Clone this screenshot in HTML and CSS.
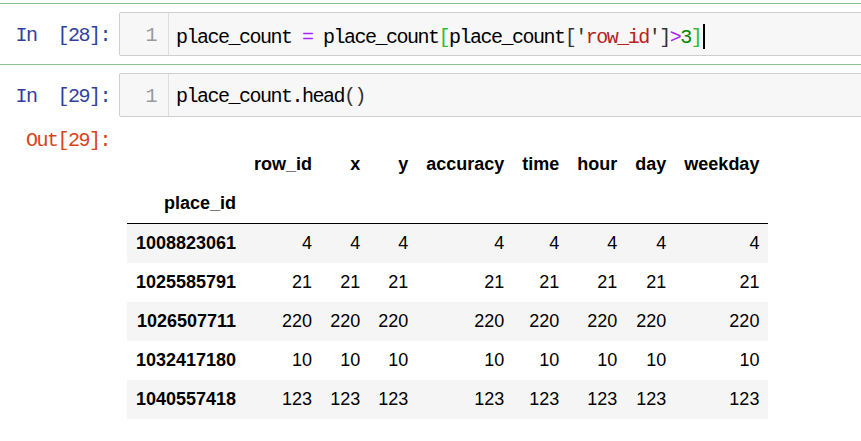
FILE: index.html
```html
<!DOCTYPE html>
<html>
<head>
<meta charset="utf-8">
<link rel="stylesheet" href="styles.css">
</head>
<body>
<div class="nb">
  <div class="cell">
    <div class="input">
      <div class="prompt in-prompt">In  [28]:</div>
      <div class="editor">
        <div class="gutter">1</div>
        <div class="code"><span>place_count </span><span class="op">=</span><span> place_count</span><span class="mb">[</span><span>place_count</span><span class="br">[&#39;</span><span class="str">row_id</span><span class="br">&#39;]</span><span class="op">&gt;</span><span class="num">3</span><span class="mb">]</span><span class="cursor"></span></div>
      </div>
    </div>
  </div>
  <div class="cell">
    <div class="input">
      <div class="prompt in-prompt">In  [29]:</div>
      <div class="editor">
        <div class="gutter">1</div>
        <div class="code"><span>place_count.head</span><span class="br">()</span></div>
      </div>
    </div>
    <div class="output">
      <div class="prompt out-prompt">Out[29]:</div>
      <div class="out-sub">
        <table class="df">
          <thead>
            <tr><th></th><th>row_id</th><th>x</th><th>y</th><th>accuracy</th><th>time</th><th>hour</th><th>day</th><th>weekday</th></tr>
            <tr class="last"><th>place_id</th><th></th><th></th><th></th><th></th><th></th><th></th><th></th><th></th></tr>
          </thead>
          <tbody>
            <tr><th>1008823061</th><td>4</td><td>4</td><td>4</td><td>4</td><td>4</td><td>4</td><td>4</td><td>4</td></tr>
            <tr><th>1025585791</th><td>21</td><td>21</td><td>21</td><td>21</td><td>21</td><td>21</td><td>21</td><td>21</td></tr>
            <tr><th>1026507711</th><td>220</td><td>220</td><td>220</td><td>220</td><td>220</td><td>220</td><td>220</td><td>220</td></tr>
            <tr><th>1032417180</th><td>10</td><td>10</td><td>10</td><td>10</td><td>10</td><td>10</td><td>10</td><td>10</td></tr>
            <tr><th>1040557418</th><td>123</td><td>123</td><td>123</td><td>123</td><td>123</td><td>123</td><td>123</td><td>123</td></tr>
          </tbody>
        </table>
      </div>
    </div>
  </div>
</div>
</body>
</html>
```
FILE: styles.css
```css
html, body {
  margin: 0;
  padding: 0;
  background: #ffffff;
  overflow: hidden;
}

.nb {
  padding-top: 3px;
  width: 880px;
}

.cell {
  border-top: 1px solid #8fc28f;
  padding: 8px 0;
}

.cell + .cell {
  padding-bottom: 0;
}

.input {
  display: flex;
  align-items: flex-start;
}

.prompt {
  width: 119px;
  flex: none;
  box-sizing: border-box;
  padding-right: 9px;
  text-align: right;
  white-space: pre;
  font-family: "Liberation Mono", monospace;
  font-size: 20px;
  letter-spacing: -1.5px;
  line-height: 24px;
}

.in-prompt {
  color: #303f9f;
  padding-top: 12px;
}

.out-prompt {
  color: #d84315;
  padding-top: 12px;
}

.editor {
  flex: 1;
  display: flex;
  height: 44px;
  box-sizing: border-box;
  border: 1px solid #cfcfcf;
  border-radius: 2px;
  background: #f7f7f7;
}

.gutter {
  width: 49px;
  flex: none;
  box-sizing: border-box;
  border-right: 1px solid #dddddd;
  padding-right: 12px;
  padding-top: 11px;
  text-align: right;
  color: #999999;
  font-family: "Liberation Mono", monospace;
  font-size: 20px;
  letter-spacing: -1.5px;
  line-height: 24px;
}

.code {
  padding-left: 7px;
  padding-top: 11px;
  white-space: pre;
  color: #000000;
  font-family: "Liberation Mono", monospace;
  font-size: 20px;
  letter-spacing: -1.5px;
  line-height: 24px;
}

.op { color: #aa22ff; }
.str { color: #ba2121; }
.num { color: #008800; }
.br { color: #333333; }
.mb { color: #33bb33; }

.cursor {
  display: inline-block;
  width: 2px;
  height: 25px;
  background: #000000;
  vertical-align: -6px;
  margin-left: 2px;
}

.output {
  display: flex;
  align-items: flex-start;
}

.out-sub {
  padding-left: 8px;
  padding-top: 28px;
}

.df {
  border-collapse: collapse;
  border-spacing: 0;
  font-family: "Liberation Sans", Arial, sans-serif;
  font-size: 18px;
  color: #000000;
}

.df th,
.df td {
  text-align: right;
  vertical-align: middle;
  padding: 9px 9px;
  line-height: 21px;
  white-space: nowrap;
}

.df th {
  font-weight: bold;
}

.df td {
  font-weight: normal;
}

.df thead tr.last th {
  border-bottom: 1px solid #000000;
}

.df tbody tr:nth-child(odd) {
  background: #f5f5f5;
}
```
